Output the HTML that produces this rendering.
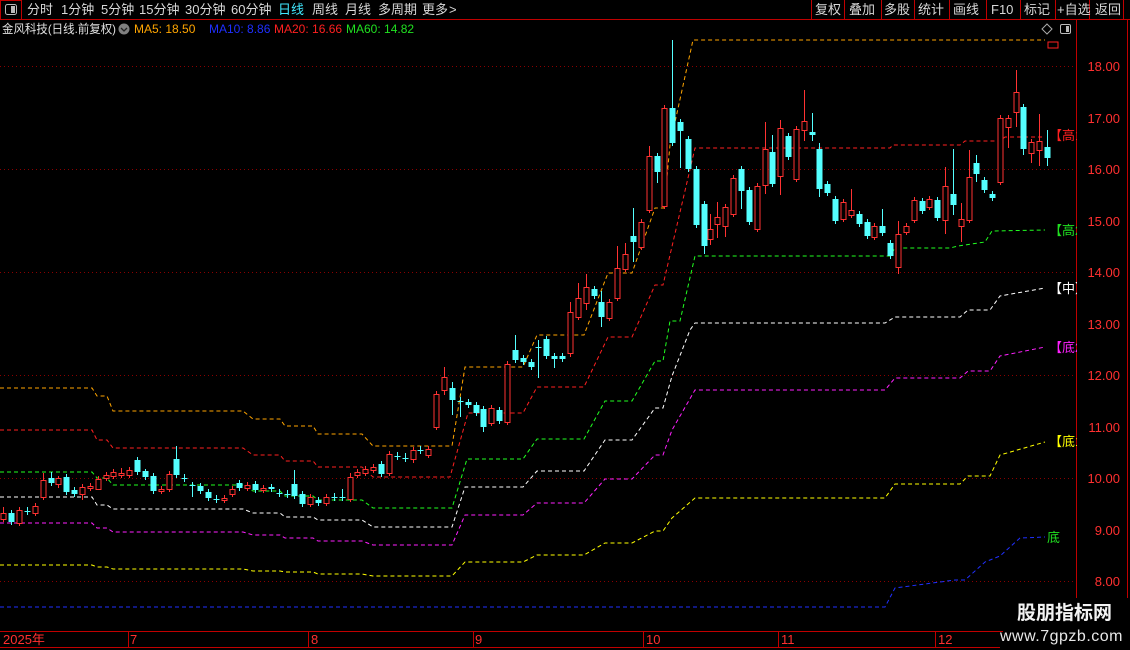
<!DOCTYPE html>
<html><head><meta charset="utf-8"><style>
html,body{margin:0;padding:0;background:#000;width:1130px;height:650px;overflow:hidden}
svg{display:block}
text{font-family:"Liberation Sans","Noto Sans CJK SC",sans-serif}
</style></head><body>
<svg id="s" width="1130" height="650" viewBox="0 0 1130 650" xmlns="http://www.w3.org/2000/svg">
<rect width="1130" height="650" fill="#000"/>
<!-- toolbar -->
<line x1="0" y1="19.5" x2="1130" y2="19.5" stroke="#c00000" stroke-width="1"/>
<rect x="0.5" y="0.5" width="21" height="19" fill="none" stroke="#c00000"/>
<rect x="5.5" y="4.5" width="11" height="10" rx="2" fill="none" stroke="#bbb"/>
<rect x="11" y="6" width="4" height="7" fill="#bbb"/>
<g font-size="13" fill="#d8d8d8">
<text x="27" y="14">分时</text><text x="61" y="14">1分钟</text><text x="101" y="14">5分钟</text>
<text x="139" y="14">15分钟</text><text x="185" y="14">30分钟</text><text x="231" y="14">60分钟</text>
<text x="278" y="14" fill="#40e8ff">日线</text><text x="312" y="14">周线</text><text x="345" y="14">月线</text>
<text x="378" y="14">多周期</text><text x="422" y="14">更多</text><text x="449" y="14">&gt;</text>
</g>
<g stroke="#c00000">
<line x1="811.5" y1="0" x2="811.5" y2="19"/><line x1="844.5" y1="0" x2="844.5" y2="19"/>
<line x1="881.5" y1="0" x2="881.5" y2="19"/><line x1="914.5" y1="0" x2="914.5" y2="19"/>
<line x1="949.5" y1="0" x2="949.5" y2="19"/><line x1="986.5" y1="0" x2="986.5" y2="19"/>
<line x1="1020.5" y1="0" x2="1020.5" y2="19"/><line x1="1055.5" y1="0" x2="1055.5" y2="19"/>
<line x1="1089.5" y1="0" x2="1089.5" y2="19"/><line x1="1123.5" y1="0" x2="1123.5" y2="19"/>
</g>
<g font-size="13" fill="#d8d8d8">
<text x="815" y="14">复权</text><text x="849" y="14">叠加</text><text x="884" y="14">多股</text>
<text x="918" y="14">统计</text><text x="953" y="14">画线</text><text x="991" y="14">F10</text>
<text x="1024" y="14">标记</text><text x="1057" y="14">+自选</text><text x="1095" y="14">返回</text>
</g>
<!-- title line -->
<g font-size="12">
<text x="2" y="33" fill="#e0e0e0" textLength="114" lengthAdjust="spacingAndGlyphs">金风科技(日线.前复权)</text>
<circle cx="124" cy="29" r="5.5" fill="#808080"/><path d="M121 28 L124 31 L127 28" stroke="#222" fill="none" stroke-width="1.3"/>
<text x="134" y="33" fill="#ffa500">MA5: 18.50</text>
<text x="209" y="33" fill="#1f2fff">MA10: 8.86</text>
<text x="274" y="33" fill="#ff2020">MA20: 16.66</text>
<text x="346" y="33" fill="#20e020">MA60: 14.82</text>
</g>
<path d="M1047 24 L1052 29 L1047 34 L1042 29 Z" fill="none" stroke="#aaa"/>
<rect x="1060.5" y="24.5" width="10" height="9" rx="1.5" fill="none" stroke="#bbb"/><rect x="1066" y="26" width="3" height="6" fill="#bbb"/>
<!-- axes -->
<line x1="1076.5" y1="20" x2="1076.5" y2="631" stroke="#c00000"/>
<line x1="1127.5" y1="20" x2="1127.5" y2="650" stroke="#c00000"/>
<g id="grid"></g>
<g id="ind" fill="none" stroke-width="1" stroke-dasharray="4 3"></g>
<g id="cdl"></g>
<!-- right labels -->
<g font-size="13">
<text x="1049" y="140" fill="#ff2020">【高1</text>
<text x="1049" y="235" fill="#20e020">【高2</text>
<text x="1049" y="293" fill="#fff">【中】</text>
<text x="1049" y="352" fill="#ff20ff">【底2</text>
<text x="1049" y="446" fill="#ffff00">【底1</text>
<text x="1047" y="542" fill="#20e020">底</text>
</g>
<rect x="1048" y="42" width="10" height="6" fill="none" stroke="#ff2020"/>
<rect x="1077" y="20" width="50" height="611" fill="#000"/>
<g font-size="13" fill="#ff3030" text-anchor="end" id="plab"></g>
<!-- time axis -->
<line x1="0" y1="631.5" x2="1130" y2="631.5" stroke="#c00000"/>
<line x1="0" y1="647.5" x2="1000" y2="647.5" stroke="#c00000"/>
<g stroke="#c00000">
<line x1="128.5" y1="631" x2="128.5" y2="648"/><line x1="308.5" y1="631" x2="308.5" y2="648"/>
<line x1="473.5" y1="631" x2="473.5" y2="648"/><line x1="643.5" y1="631" x2="643.5" y2="648"/>
<line x1="778.5" y1="631" x2="778.5" y2="648"/><line x1="935.5" y1="631" x2="935.5" y2="648"/>
</g>
<g font-size="13" fill="#ff3030">
<text x="3" y="644">2025年</text><text x="130" y="644">7</text><text x="311" y="644">8</text>
<text x="475" y="644">9</text><text x="646" y="644">10</text><text x="781" y="644">11</text><text x="938" y="644">12</text>
</g>
<rect x="1003" y="598" width="127" height="52" fill="#000"/>
<text x="1017" y="619" font-size="19" font-weight="bold" fill="#f2f2f2">股朋指标网</text>
<text x="1000" y="641" font-size="16" fill="#e8e8e8" letter-spacing="0.5">www.7gpzb.com</text>
</svg>
<script>
var NS="http://www.w3.org/2000/svg";
function el(t,a,p){var e=document.createElementNS(NS,t);for(var k in a)e.setAttribute(k,a[k]);p.appendChild(e);return e;}
function Y(p){return 169+(16-p)*51.5;}
var g=document.getElementById('grid'),pl=document.getElementById('plab');
for(var p=8;p<=18;p++){var y=Math.round(Y(p));
 if(p%2==0) el('line',{x1:0,y1:y+.5,x2:1076,y2:y+.5,stroke:'#8a0000','stroke-dasharray':'1 3'},g);
 el('line',{x1:1076,y1:y+.5,x2:1082,y2:y+.5,stroke:'#c00000'},g);
 var t=el('text',{x:1120,y:y+5},pl);t.textContent=p.toFixed(2);}
var ind=document.getElementById('ind');
var L={
'#ffa500':"0,388 92,388 97,396 107,396 113,411 243,411 253,419 280,419 285,426 313,426 318,434 362,434 373,446 452,446 465,367 523,367 537,335 584,335 608,273 632,273 655,208 664,208 670,145 693,40 1045,40",
'#ff2020':"0,430 92,430 97,440 107,440 113,448 243,448 253,455 280,455 285,461 313,461 318,467 362,467 373,477 450,477 468,413 523,413 537,387 584,387 608,337 632,337 655,285 663,285 695,148 890,148 893,145 960,145 965,141 1000,141 1005,137 1045,137",
'#20ff20':"0,472 92,472 97,478 107,478 113,485 243,485 253,491 280,491 285,496 313,496 318,500 362,500 373,508 452,508 467,459 523,459 537,439 584,439 605,401 632,401 655,361 663,361 670,321 680,321 695,256 890,256 895,248 950,248 958,246 985,242 992,231 1045,230",
'#ffffff':"0,497 92,497 97,505 107,505 113,509 243,509 253,513 280,513 285,517 313,517 318,520 362,520 373,527 452,527 465,487 523,487 537,471 584,471 605,440 632,440 655,408 663,408 672,376 690,330 695,323 885,323 895,317 960,317 968,310 990,310 1000,296 1045,288",
'#ff20ff':"0,523 92,523 97,528 107,528 113,532 243,532 253,535 280,535 285,538 313,538 318,541 362,541 373,545 452,545 465,515 523,515 537,503 584,503 605,479 632,479 655,455 663,455 672,430 695,390 885,390 895,378 960,378 968,371 990,371 1000,356 1045,347",
'#ffff00':"0,565 92,565 97,567 107,567 113,569 243,569 253,571 280,571 285,572 313,572 318,574 362,574 373,576 452,576 465,562 523,562 537,555 584,555 605,543 632,543 655,531 663,531 672,518 695,498 885,498 895,484 960,484 968,476 990,476 1000,455 1045,442",
'#2030ff':"0,607 885,607 895,588 955,580 965,580 985,562 1000,556 1020,538 1045,537"};
for(var c in L) el('polyline',{points:L[c],stroke:c},ind);
var D=[[519,513,507],[513,522,0,525],[523,510],[511,511,507,515],[513,506,503],[497,480,473],[478,483,472],[484,478,476,488],[477,492,474],[490,494],
[494,487,0,500],[488,486],[489,479,0,490],[478,475,472],[476,472],[475,473,468],[475,470],[460,472,457],[471,477,469],[476,491],
[491,489],[489,474],[459,475,446],[478,478,474,482],[485,486,0,497],[486,491],[492,498,0,501],[499,499,495,503],[500,498],[494,489],
[483,488],[488,485],[484,490],[490,488],[487,489],[493,493,489,497],[494,494,490,498],[484,496,470],[494,504],[504,497],
[500,503],[503,497],[497,497,493,501],[497,497,489,501],[499,477,473],[475,472],[473,469],[470,467],[464,474],[473,454],
[456,456,452,460],[458,458,453,462],[459,450,0,463],[450,450,446,454],[455,449],[427,394],[390,377,367,395],[388,400,382,415],[401,401,397,417],[402,405],
[405,413],[409,427,0,432],[423,408],[410,421],[422,364],[350,360,335],[358,362],[362,367],[347,347,340,378],[339,356],
[356,359,0,368],[356,359],[353,312,302,357],[317,298,283],[303,287,274,310],[289,296],[302,317,291,327],[318,302],[298,268,246],[269,254,243],
[236,242,208,262],[247,222],[210,156,146],[156,172,0,183],[206,108],[108,143,40],[122,131,0,168],[139,169],[169,225,0,228],[204,246,0,254]];
var X2=[[710,239,229,214,245],[717,224,217,202,238],[725,226,207,0,237],[733,214,178],[741,169,191,0,209],[749,190,222],[757,229,186],[765,185,149,122,194],[772,152,184,135],[780,176,128,120,195],
[788,136,157],[796,179,129],[804,130,121,90,141],[812,132,135,113,141],[819,149,189,143,197],[827,184,193],[835,199,221],[843,219,202],[851,215,210,189],[859,214,224],
[867,222,236],[874,237,226],[882,226,233,209],[890,243,256],[898,267,234,221,274],[906,232,226],[914,220,200],[922,201,211],[929,207,199],[937,200,218],
[945,220,186,167,234],[953,194,205,149,215],[961,226,219,203,242],[969,220,177,150],[976,163,174,155,182],[984,180,190],[992,194,198],[1000,182,118],[1008,127,118,0,148],[1016,112,92,70,127],
[1023,107,149,0,155],[1031,153,142,0,163],[1039,150,141,114,166],[1047,147,158,130,166]];
var all=[];
D.forEach(function(d,i){all.push([Math.round(3.3+7.87*i)].concat(d));});
X2.forEach(function(d){all.push(d);});
var cg=document.getElementById('cdl');
all.forEach(function(d){var x=d[0],o=d[1],c=d[2],t=Math.min(o,c),b=Math.max(o,c);
 var h=d[3]||t-3,l=d[4]||b+3;var up=c<o;var col=up?'#ff3232':'#54ffff';
 el('line',{x1:x+.5,y1:h,x2:x+.5,y2:l,stroke:col},cg);
 if(b-t<1){el('line',{x1:x-2.5,y1:t+.5,x2:x+3.5,y2:t+.5,stroke:col},cg);}
 else if(up){el('rect',{x:x-2,y:t+.5,width:5,height:b-t,fill:'#000',stroke:col},cg);}
 else{el('rect',{x:x-2.5,y:t,width:6,height:b-t,fill:col},cg);}
});
</script>
</body></html>
